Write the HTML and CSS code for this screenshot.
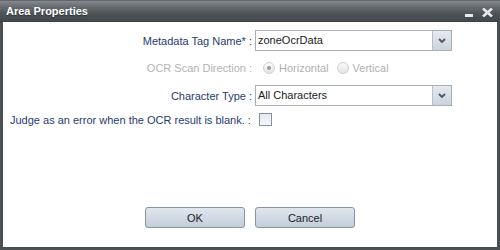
FILE: index.html
```html
<!DOCTYPE html>
<html lang="en">
<head>
    <meta charset="UTF-8">
    <title>Area Properties</title>
    <link rel="stylesheet" href="styles.css">
</head>
<body>
    <div class="window">
        <div class="title-bar">
            <span class="title">Area Properties</span>
            <div class="title-tools">
                <svg class="tool" width="9" height="9" viewBox="0 0 9 9"><rect x="0" y="6" width="8" height="3" fill="#e6e8ea"/></svg>
                <svg class="tool" width="11" height="9" viewBox="0 0 11 9"><path d="M1 0.5 L10 8.5 M10 0.5 L1 8.5" stroke="#e6e8ea" stroke-width="2.6"/></svg>
            </div>
        </div>

        <div class="content">
            <div class="form-grid">
                <label class="field-label">Metadata Tag Name* :</label>
                <div class="combo">
                    <span class="combo-text">zoneOcrData</span>
                    <span class="combo-btn"><svg width="8" height="6" viewBox="0 0 8 6"><path d="M1 1 L4 4 L7 1" fill="none" stroke="#4d5863" stroke-width="1.8"/></svg></span>
                </div>

                <label class="field-label disabled">OCR Scan Direction :</label>
                <div class="radio-group">
                    <span class="radio checked"></span><span class="radio-text">Horizontal</span>
                    <span class="radio"></span><span class="radio-text">Vertical</span>
                </div>

                <label class="field-label">Character Type :</label>
                <div class="combo">
                    <span class="combo-text">All Characters</span>
                    <span class="combo-btn"><svg width="8" height="6" viewBox="0 0 8 6"><path d="M1 1 L4 4 L7 1" fill="none" stroke="#4d5863" stroke-width="1.8"/></svg></span>
                </div>

                <label class="field-label left">Judge as an error when the OCR result is blank. :</label>
                <div class="check-cell"><span class="checkbox"></span></div>
            </div>

            <div class="buttons">
                <button class="btn">OK</button>
                <button class="btn">Cancel</button>
            </div>
        </div>
    </div>
</body>
</html>
```

FILE: styles.css
```css
body {
    margin: 0;
    font-family: "Liberation Sans", Arial, sans-serif;
    font-size: 11px;
    background: #fff;
}

.window {
    width: 500px;
    height: 250px;
    box-sizing: border-box;
    display: flex;
    flex-direction: column;
    border: 3px solid #4a4f54;
    border-top: none;
    background: #fff;
}

.title-bar {
    height: 22px;
    margin: 0 -3px;
    padding: 0 7px 0 6px;
    display: flex;
    align-items: center;
    justify-content: space-between;
    background: linear-gradient(#3e4347 0, #868a8e 1px, #6a6f74 6px, #4d5257 14px, #43484d 21px, #3a3e42 22px);
}

.title {
    color: #fff;
    font-weight: bold;
    font-size: 11px;
    text-shadow: 0 1px 1px rgba(0, 0, 0, 0.4);
}

.title-tools {
    display: flex;
    align-items: center;
    gap: 8px;
    margin-top: 3px;
}

.content {
    flex: 1;
    display: flex;
    flex-direction: column;
    padding: 8px 0 19px;
}

.form-grid {
    display: grid;
    grid-template-columns: 249px 197px;
    grid-template-rows: 21px 20px 21px 13px;
    column-gap: 3px;
    row-gap: 7px;
}

.field-label {
    color: #1f3c70;
    text-align: right;
    align-self: center;
    white-space: nowrap;
}

.field-label.disabled {
    color: #b3b3b3;
}

.field-label.left {
    text-align: left;
    padding-left: 7px;
}

.combo {
    display: flex;
    border: 1px solid #a9afb7;
    background: #fff;
}

.combo-text {
    flex: 1;
    padding-left: 2px;
    color: #222;
    line-height: 19px;
}

.combo-btn {
    width: 18px;
    display: flex;
    align-items: center;
    justify-content: center;
    border-left: 1px solid #b9c0c9;
    background: linear-gradient(#e6eaef, #ccd3dc);
}

.radio-group {
    display: flex;
    align-items: center;
    padding-left: 8px;
}

.radio {
    width: 10px;
    height: 10px;
    border: 1px solid #cfcfcf;
    border-radius: 50%;
    background: linear-gradient(#fafafa, #e4e4e4);
    position: relative;
}

.radio.checked::after {
    content: "";
    position: absolute;
    left: 3px;
    top: 3px;
    width: 4px;
    height: 4px;
    border-radius: 50%;
    background: #9a9a9a;
}

.radio-text {
    color: #b0b0b0;
    margin: 0 8px 0 4px;
}

.check-cell {
    display: flex;
    align-items: center;
    padding-left: 4px;
}

.checkbox {
    width: 11px;
    height: 11px;
    border: 1px solid #8590a0;
    background: linear-gradient(#e4e8ee, #f4f6f9);
}

.buttons {
    margin-top: auto;
    display: flex;
    justify-content: center;
    gap: 10px;
}

.btn {
    width: 100px;
    height: 21px;
    padding: 0;
    font-family: "Liberation Sans", Arial, sans-serif;
    font-size: 11px;
    color: #222;
    border: 1px solid #8794a6;
    border-radius: 3px;
    background: linear-gradient(#dfe6ee, #c3cedb);
}
```
